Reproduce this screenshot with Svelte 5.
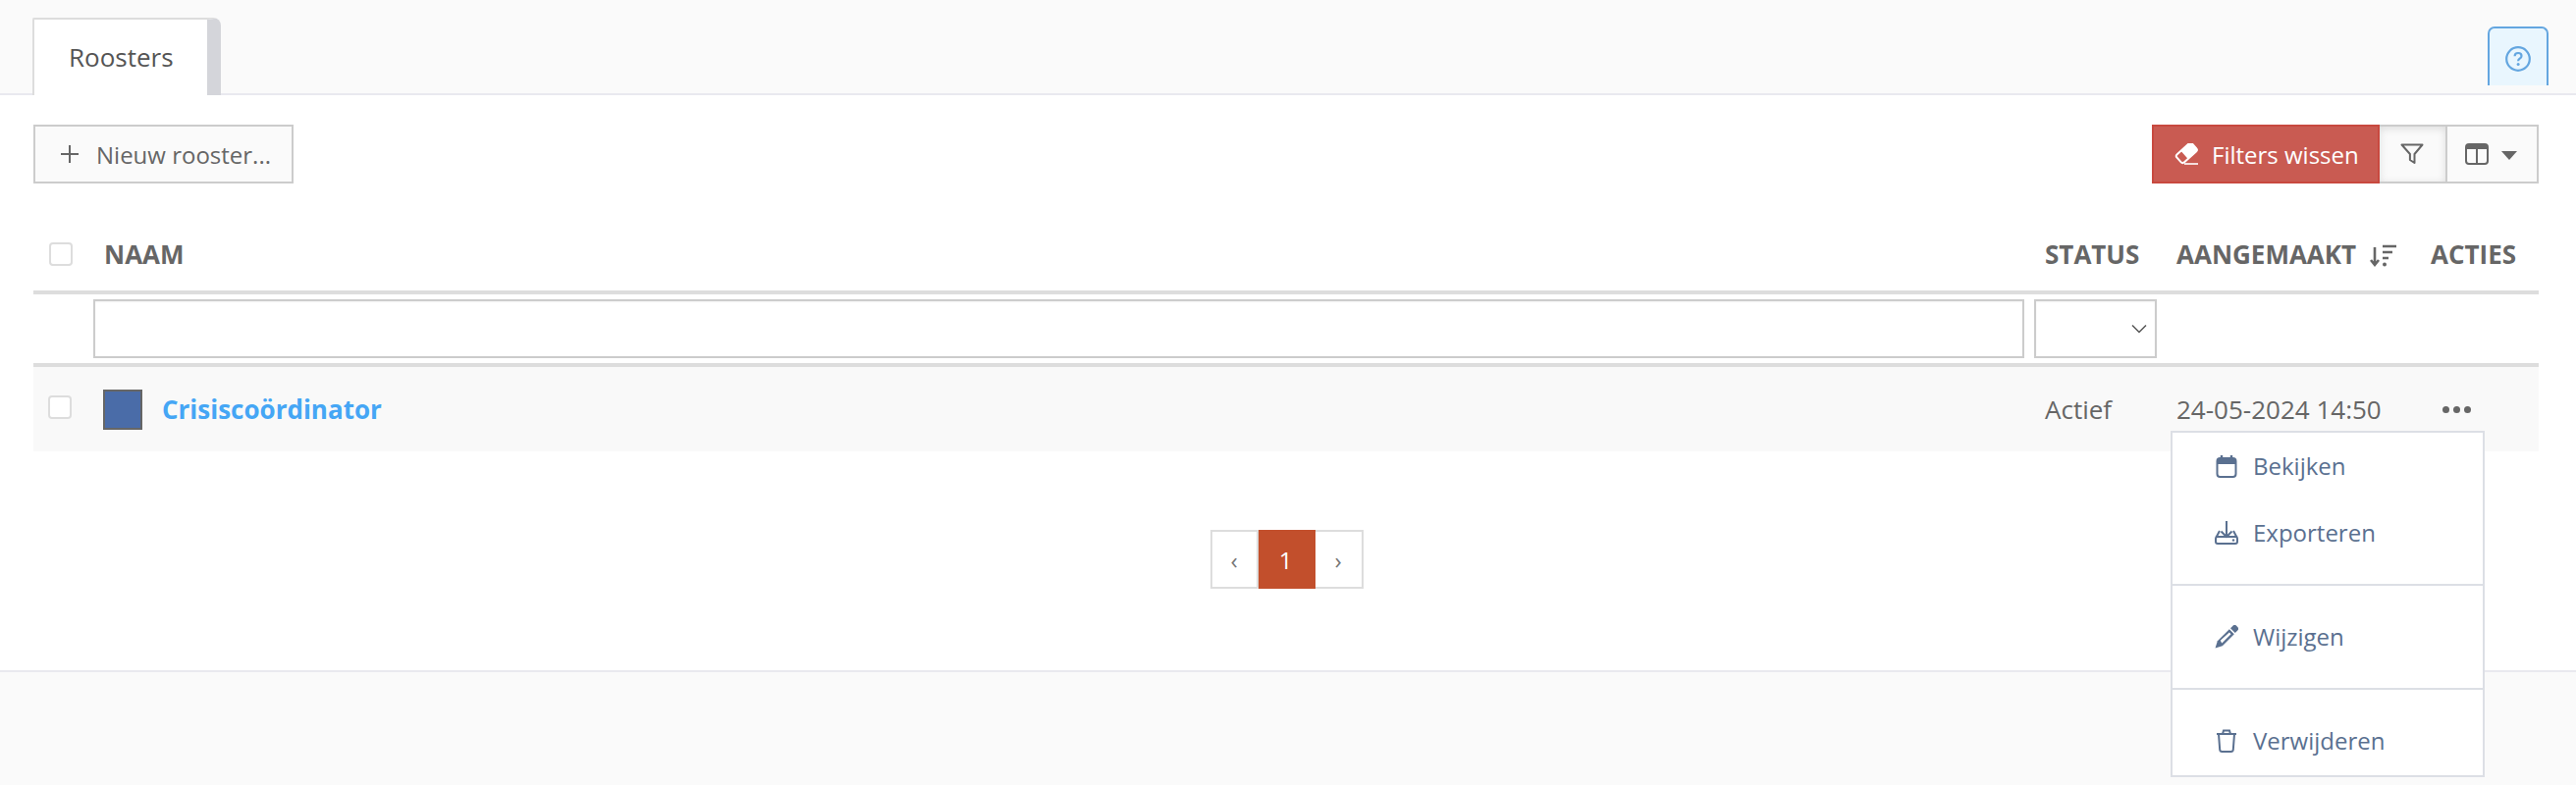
<script>
  let columns = ["Status", "Aangemaakt", "Acties"];
</script>

<div class="page">
  <div class="topbar">
    <div class="tab">Roosters</div>
    <button class="help" aria-label="help">
      <svg width="28" height="28" viewBox="0 0 28 28" fill="none">
        <circle cx="14" cy="14" r="11.8" stroke="#64a6e0" stroke-width="2.2" />
        <path d="M10.6 11.2c0-2 1.5-3.2 3.5-3.2s3.4 1.2 3.4 3c0 2.8-3.400 2.600-3.400 5.200" stroke="#64a6e0" stroke-width="2.2" />
        <circle cx="14.1" cy="19.6" r="1.5" fill="#64a6e0" />
      </svg>
    </button>
  </div>

  <div class="content">
    <div class="toolbar">
      <button class="btn new">
        <svg width="20" height="20" viewBox="0 0 20 20"><path d="M10 1v18M1 10h18" stroke="#666" stroke-width="2" /></svg>
        Nieuw rooster...
      </button>
      <div class="group">
        <button class="btn clear">
          <svg width="24" height="22" viewBox="0 0 24 22" fill="none">
            <g transform="rotate(-42 12 9.500)">
              <rect x="1.500" y="4.500" width="21" height="11" rx="2.500" stroke="#fff" stroke-width="2" />
              <path d="M9 4.500h11a2.500 2.500 0 0 1 2.500 2.500v6a2.500 2.500 0 0 1-2.500 2.500h-11z" fill="#fff" />
            </g>
            <path d="M10 21h14" stroke="#fff" stroke-width="1.600" />
          </svg>
          Filters wissen
        </button>
        <button class="btn filter" aria-label="filter">
          <svg width="24" height="22" viewBox="0 0 24 22" fill="none">
            <path d="M1.500 1.500h21l-8 9.500v9l-4.600-3v-6z" stroke="#666" stroke-width="2" stroke-linejoin="round" />
          </svg>
        </button>
        <button class="btn cols" aria-label="kolommen">
          <svg width="24" height="22" viewBox="0 0 24 22" fill="none">
            <rect x="1" y="1" width="22" height="20" rx="3" stroke="#666" stroke-width="2" />
            <path d="M1 2.500a2 2 0 0 1 2-1.500h18a2 2 0 0 1 2 1.500v3.500h-22z" fill="#666" />
            <path d="M12 5v16" stroke="#666" stroke-width="2" />
          </svg>
          <span class="caret"></span>
        </button>
      </div>
    </div>

    <div class="table">
      <div class="row head">
        <div class="cell"><span class="check"></span></div>
        <div class="cell pad">Naam</div>
        {#each columns as col}
          <div class="cell pad">
            {col}
            {#if col == "Aangemaakt"}
              <svg class="sort" width="27" height="24" viewBox="0 0 27 24" fill="none">
                <path d="M5 3v18M1 16l4 5 4-5" stroke="#666" stroke-width="2.600" />
                <path d="M13 2h14M13 8h10M13 14h6" stroke="#666" stroke-width="2.600" />
                <circle cx="15" cy="20.500" r="2" fill="#666" />
              </svg>
            {/if}
          </div>
        {/each}
      </div>

      <div class="row filters">
        <div class="cell"></div>
        <div class="cell"><input class="field" type="text" /></div>
        <div class="cell status-filter">
          <div class="field select">
            <svg width="16" height="10" viewBox="0 0 16 10" fill="none"><path d="M1 1.500l7 7 7-7" stroke="#555" stroke-width="1.500" /></svg>
          </div>
        </div>
        <div class="cell"></div>
        <div class="cell"></div>
      </div>

      <div class="row data">
        <div class="cell"><span class="check in-row"></span></div>
        <div class="cell pad name">
          <span class="swatch"></span>
          <a href="#top">Crisiscoördinator</a>
        </div>
        <div class="cell pad">Actief</div>
        <div class="cell pad">24-05-2024 14:50</div>
        <div class="cell pad actions">
          <span class="dots"><i></i><i></i><i></i></span>
          <div class="menu">
            <div class="section">
              <div class="item">
                <svg width="24" height="24" viewBox="0 0 24 24" fill="none">
                  <rect x="2.500" y="4" width="19" height="19" rx="3" stroke="#5a7090" stroke-width="2" />
                  <path d="M2.500 7a3 3 0 0 1 3-3h13a3 3 0 0 1 3 3v3h-19z" fill="#5a7090" />
                  <path d="M7 1v4M17 1v4" stroke="#5a7090" stroke-width="2.400" />
                </svg>
                Bekijken
              </div>
              <div class="item">
                <svg width="24" height="24" viewBox="0 0 24 24" fill="none">
                  <path d="M12 0v16M6.500 10.500 12 16l5.500-5.500" stroke="#5a7090" stroke-width="2" />
                  <path d="M5 10l-3.500 6.500M19 10l3.500 6.500" stroke="#5a7090" stroke-width="2" />
                  <rect x="1" y="16" width="22" height="7" rx="2" stroke="#5a7090" stroke-width="2" />
                  <circle cx="19" cy="19.500" r="1.200" fill="#5a7090" />
                </svg>
                Exporteren
              </div>
            </div>
            <div class="section single">
              <div class="item">
                <svg width="24" height="24" viewBox="0 0 24 24" fill="#5a7090">
                  <path d="M18.500.7a2.600 2.600 0 0 1 3.600 0l1.200 1.300a2.600 2.600 0 0 1 0 3.600l-2.500 2.500-4.800-4.900z" />
                  <path d="M14.900 4.200 2.800 16.300.5 23.500l7.300-2.200 12-12.100z" />
                  <path d="M5.700 15.800 14.900 7.600l1.600 1.600-9.200 9.200z" fill="#fff" />
                </svg>
                Wijzigen
              </div>
            </div>
            <div class="section single last">
              <div class="item">
                <svg width="24" height="24" viewBox="0 0 24 24" fill="none">
                  <path d="M2 5h20M4 5l1.200 16a2.200 2.200 0 0 0 2.200 2h9.200a2.200 2.200 0 0 0 2.200-2l1.200-16M8 5l1-3.500h6L16 5" stroke="#5a7090" stroke-width="2" />
                </svg>
                Verwijderen
              </div>
            </div>
          </div>
        </div>
      </div>
    </div>

    <div class="pager">
      <span class="page-link">‹</span>
      <span class="page-link active">1</span>
      <span class="page-link">›</span>
    </div>
  </div>

  <div class="footer"></div>
</div>

<style>
  :global(body) {
    margin: 0;
    background: #fff;
  }

  .page {
    width: 2624px;
    height: 800px;
    display: flex;
    flex-direction: column;
    overflow: hidden;
    font-family: "Open Sans", sans-serif;
    font-size: 24px;
    color: #666;
  }

  .topbar {
    height: 97px;
    box-sizing: border-box;
    flex-shrink: 0;
    background: #fafafa;
    border-bottom: 2px solid #e9e9ef;
    padding: 0 28px 0 33px;
    display: flex;
    justify-content: space-between;
  }

  .tab {
    margin-top: 18px;
    height: 79px;
    width: 192px;
    box-sizing: border-box;
    background: #fff;
    border: 2px solid #ddd;
    border-right: 14px solid #d4d5da;
    border-bottom: none;
    border-radius: 2px 8px 0 0;
    padding: 21px 0 0 35px;
    line-height: 35px;
    font-size: 26px;
    color: #555;
  }

  .help {
    margin-top: 27px;
    width: 62px;
    height: 60px;
    background: #e9f6fe;
    border: 2px solid #64a6e0;
    border-bottom: none;
    border-radius: 7px 7px 0 0;
    padding: 3px 0 0;
    display: flex;
    align-items: center;
    justify-content: center;
  }

  .content {
    flex: 1;
    padding: 30px 38px 0 34px;
    display: flex;
    flex-direction: column;
  }

  .toolbar {
    display: flex;
    justify-content: space-between;
  }

  .group {
    display: flex;
  }

  .btn {
    height: 60px;
    box-sizing: border-box;
    background: #fafafa;
    border: 2px solid #ccc;
    font-family: inherit;
    font-size: 24px;
    color: #666;
    display: flex;
    align-items: center;
    padding: 0;
  }

  .new {
    width: 265px;
    padding-left: 25px;
    gap: 17px;
  }

  .clear {
    width: 232px;
    background: #c95b52;
    border-color: #c8493f;
    color: #fff;
    padding-left: 21px;
    gap: 14px;
  }

  .filter {
    width: 69px;
    justify-content: center;
    padding-right: 2px;
    border-left: none;
    box-shadow: inset 0 2px 8px rgba(0, 0, 0, 0.12);
  }

  .cols {
    width: 93px;
    border-left: none;
    padding-left: 18px;
    gap: 13px;
  }

  .caret {
    width: 0;
    height: 0;
    border: 8px solid transparent;
    border-top: 9px solid #666;
    border-bottom: none;
    margin-top: 3px;
  }

  .table {
    margin-top: 33px;
    font-size: 26px;
  }

  .row {
    display: grid;
    grid-template-columns: 56px 1977px 134px 259px 126px;
    align-items: center;
  }

  .cell {
    min-width: 0;
    box-sizing: border-box;
    white-space: nowrap;
  }

  .pad {
    padding-left: 16px;
  }

  .head {
    height: 76px;
    border-bottom: 4px solid #ddd;
    font-weight: 700;
    text-transform: uppercase;
  }

  .head .cell {
    padding-top: 2px;
  }

  .sort {
    vertical-align: -4px;
    margin-left: 7px;
  }

  .check {
    display: block;
    width: 24px;
    height: 24px;
    box-sizing: border-box;
    margin-left: 16px;
    background: #fff;
    border: 2px solid #ddd;
    border-radius: 4px;
  }

  .in-row {
    margin-left: 15px;
    margin-bottom: 4px;
  }

  .filters {
    height: 70px;
    border-bottom: 4px solid #ddd;
  }

  .filters .cell {
    padding: 0 5px;
  }

  .filters .status-filter {
    padding-right: 4px;
  }

  .field {
    display: block;
    width: 100%;
    height: 60px;
    box-sizing: border-box;
    margin: 0;
    background: #fff;
    border: 2px solid #ccc;
    border-radius: 0;
    outline: none;
    box-shadow: inset 0 1px 2px rgba(0, 0, 0, 0.05);
  }

  .select {
    display: flex;
    align-items: center;
    justify-content: flex-end;
    padding-right: 8px;
  }

  .data {
    height: 86px;
    background: #f9f9f9;
  }

  .data .cell {
    line-height: 34px;
  }

  .name {
    display: flex;
    align-items: center;
    gap: 20px;
    padding-left: 15px;
  }

  .swatch {
    width: 40px;
    height: 41px;
    box-sizing: border-box;
    background: #4a6ca8;
    border: 2px solid #666;
  }

  a {
    color: #45a6f5;
    font-weight: 700;
    text-decoration: none;
  }

  .actions {
    position: relative;
    height: 100%;
    display: flex;
    align-items: center;
  }

  .dots {
    display: flex;
    gap: 4px;
    margin-left: 12px;
  }

  .dots i {
    width: 7px;
    height: 7px;
    border-radius: 50%;
    background: #666;
  }

  .menu {
    position: absolute;
    top: 65px;
    left: -249px;
    width: 320px;
    box-sizing: border-box;
    background: #fff;
    border: 2px solid #dcdfe5;
    color: #5a7090;
    font-size: 24px;
  }

  .section {
    height: 156px;
    box-sizing: border-box;
    border-bottom: 2px solid #dcdfe5;
    padding: 9px 0 0 43px;
  }

  .section.single {
    height: 106px;
    padding-top: 27px;
  }

  .section.last {
    height: 87px;
    border-bottom: none;
  }

  .item {
    height: 50px;
    margin-bottom: 18px;
    display: flex;
    align-items: center;
    gap: 15px;
    line-height: 30px;
    padding-bottom: 1px;
    box-sizing: border-box;
  }

  .pager {
    margin-top: 80px;
    align-self: center;
    display: flex;
    height: 60px;
    margin-left: 1px;
  }

  .page-link {
    width: 49px;
    box-sizing: border-box;
    border: 2px solid #ddd;
    border-left-width: 0;
    display: flex;
    align-items: center;
    justify-content: center;
    color: #777;
    font-size: 24px;
  }

  .page-link:first-child {
    border-left-width: 2px;
  }

  .active {
    width: 58px;
    background: #c24f2c;
    border-color: #c24f2c;
    color: #fff;
  }

  .footer {
    height: 117px;
    flex-shrink: 0;
    box-sizing: border-box;
    background: #fafafa;
    border-top: 2px solid #e9e9ef;
  }
</style>
